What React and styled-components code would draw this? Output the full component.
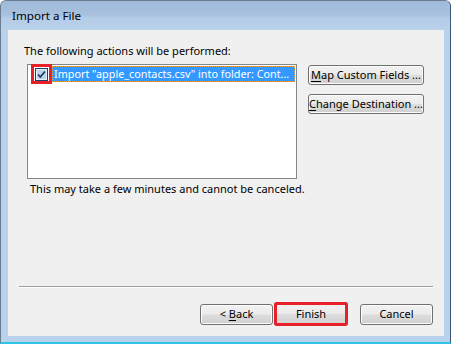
import React from "react";
import styled, { createGlobalStyle } from "styled-components";

const Global = createGlobalStyle`
  html, body { margin: 0; padding: 0; background: #fff; }
  body { font-family: "Noto Sans", "DejaVu Sans", sans-serif; font-size: 11px; }
`;

const Frame = styled.div`
  width: 451px;
  height: 344px;
  box-sizing: border-box;
  background: #b9d1ea;
  border-left: 1px solid #6b7c90;
  border-top: 1px solid #6b7c90;
  border-right: 1px solid #3f5670;
  border-bottom: 2px solid #2fc4e6;
  border-top-left-radius: 6px;
  border-top-right-radius: 6px;
  display: flex;
  flex-direction: column;
  overflow: hidden;
`;

const TitleBar = styled.div`
  height: 29px;
  flex: none;
  display: flex;
  align-items: center;
  padding: 0 0 0 11px;
  background: linear-gradient(#a0bbd9 0%, #a6c0dd 45%, #b4cce7 60%, #b9d1ea 100%);
  color: #000;
  font-size: 11.6px;
`;

const Client = styled.div`
  flex: 1;
  margin: 0 6px 6px 7px;
  background: #f0f0f0;
  display: flex;
  flex-direction: column;
  padding: 13px 11px 10px 16px;
  color: #000;
`;

const Label = styled.div`
  font-size: 11px;
  line-height: 16px;
  margin-left: ${p => p.$indent || 0}px;
  margin-top: ${p => p.$top || 0}px;
`;

const MainRow = styled.div`
  display: flex;
  align-items: flex-start;
  margin-top: 5px;
  margin-left: 3px;
`;

const ListBox = styled.div`
  width: 270px;
  height: 115px;
  box-sizing: border-box;
  background: #fff;
  border: 1px solid #828790;
  padding: 1px 1px;
`;

const ListRow = styled.div`
  display: flex;
  align-items: center;
  height: 16px;
`;

const CheckCell = styled.div`
  box-sizing: border-box;
  width: 15px;
  height: 14px;
  margin-left: 5px;
  margin-right: 3px;
  display: flex;
  align-items: center;
  justify-content: center;
  outline: 3px solid #e8202a;
  flex: none;
`;

const RowText = styled.div`
  flex: 1;
  height: 16px;
  box-sizing: border-box;
  background: #3399ff;
  color: #fff;
  border: 1px dotted #f5a442;
  line-height: 14px;
  padding-left: 1px;
  white-space: nowrap;
  overflow: hidden;
  font-size: 10.8px;
`;

const SideButtons = styled.div`
  display: flex;
  flex-direction: column;
  gap: 9px;
  margin-left: 11px;
  margin-top: 1px;
`;

const Btn = styled.button`
  width: ${p => p.$w}px;
  height: ${p => p.$h || 21}px;
  box-sizing: border-box;
  border: 1px solid #707070;
  border-radius: 3px;
  background: linear-gradient(#f2f2f2 0%, #ebebeb 48%, #dddddd 52%, #cfcfcf 100%);
  box-shadow: inset 0 0 0 1px #fcfcfc;
  font-family: "Noto Sans", "DejaVu Sans", sans-serif;
  font-size: 11px;
  color: #000;
  padding: 0;
  display: flex;
  align-items: center;
  justify-content: center;
  outline: ${p => (p.$marked ? "3px solid #e8202a" : "none")};
  outline-offset: -3px;
  white-space: nowrap;
`;

const BtnLabel = styled.span`
  white-space: pre;
  line-height: 14px;
`;

const U = styled.span`
  text-decoration: underline;
  text-underline-offset: 2px;
`;

const Spacer = styled.div`
  flex: 1;
`;

const Separator = styled.div`
  height: 0;
  border-top: 1px solid #a0a0a0;
  border-bottom: 1px solid #ffffff;
  margin: 0 0 14px -5px;
`;

const BottomRow = styled.div`
  display: flex;
  justify-content: flex-end;
  align-items: center;
`;

const Gap = styled.div`
  width: ${p => p.$w}px;
  flex: none;
`;

function CheckBoxIcon() {
  return (
    <svg width="13" height="13" viewBox="0 0 13 13">
      <rect x="0.5" y="0.5" width="12" height="12" fill="#dbe7f4" stroke="#1b3f66" />
      <rect x="1.5" y="1.5" width="10" height="10" fill="#bcd3ec" stroke="#e6eef8" />
      <path d="M3 6.5 L5.3 9 L10 3.5" fill="none" stroke="#1b3a6e" strokeWidth="1.8" />
    </svg>
  );
}

export default function App() {
  return (
    <>
      <Global />
      <Frame>
        <TitleBar>Import a File</TitleBar>
        <Client>
          <Label>The following actions will be performed:</Label>
          <MainRow>
            <ListBox>
              <ListRow>
                <CheckCell>
                  <CheckBoxIcon />
                </CheckCell>
                <RowText>Import "apple_contacts.csv" into folder: Cont...</RowText>
              </ListRow>
            </ListBox>
            <SideButtons>
              <Btn $w={116} $h={20}>
                <BtnLabel><U>M</U>ap Custom Fields ...</BtnLabel>
              </Btn>
              <Btn $w={116} $h={20}>
                <BtnLabel><U>C</U>hange Destination ...</BtnLabel>
              </Btn>
            </SideButtons>
          </MainRow>
          <Label $indent={6} $top={2}>
            This may take a few minutes and cannot be canceled.
          </Label>
          <Spacer />
          <Separator />
          <BottomRow>
            <Btn $w={73}>
              <BtnLabel>{"< "}<U>B</U>ack</BtnLabel>
            </Btn>
            <Gap $w={1} />
            <Btn $w={74} $h={24} $marked>
              <BtnLabel>Finish</BtnLabel>
            </Btn>
            <Gap $w={12} />
            <Btn $w={73}>
              <BtnLabel>Cancel</BtnLabel>
            </Btn>
          </BottomRow>
        </Client>
      </Frame>
    </>
  );
}
